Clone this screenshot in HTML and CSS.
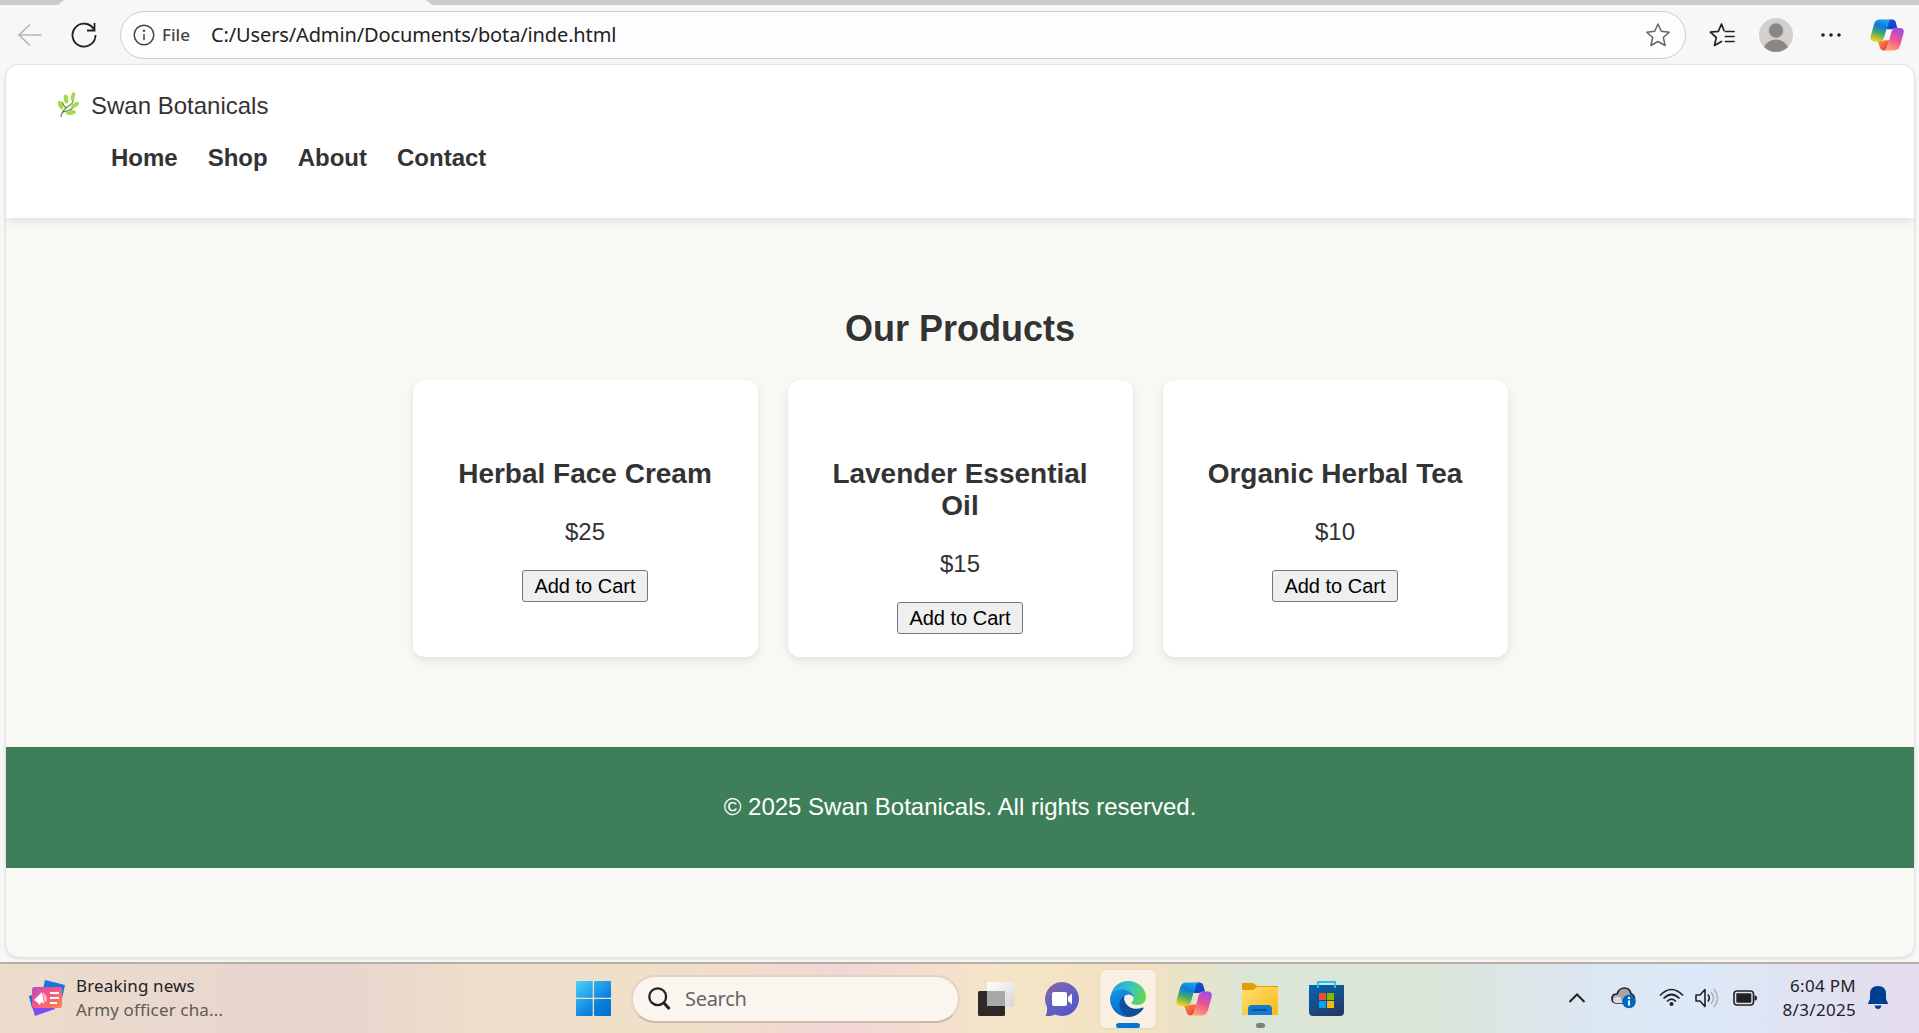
FILE: index.html
```html
<!DOCTYPE html>
<html lang="en">
<head>
<meta charset="utf-8">
<title>Swan Botanicals</title>
<link rel="stylesheet" href="styles.css">
</head>
<body>
<svg class="defs" width="0" height="0" aria-hidden="true">
  <defs>
    <linearGradient id="cpBlue" x1="0.6" y1="0" x2="0.3" y2="1"><stop offset="0" stop-color="#1ba2f0"/><stop offset=".3" stop-color="#0b7bdc"/><stop offset=".62" stop-color="#47a96b"/><stop offset="1" stop-color="#fcd116"/></linearGradient>
    <linearGradient id="cpPink" x1="0.7" y1="0" x2="0.3" y2="1"><stop offset="0" stop-color="#a54be8"/><stop offset=".5" stop-color="#ee5392"/><stop offset="1" stop-color="#ffa766"/></linearGradient>
    <linearGradient id="cpNavy" x1="0" y1="0" x2="1" y2="1"><stop offset="0" stop-color="#0a5fd8"/><stop offset="1" stop-color="#1739b8"/></linearGradient>
    <linearGradient id="cpRed" x1="0" y1="0" x2="1" y2="1"><stop offset="0" stop-color="#ff9a3d"/><stop offset="1" stop-color="#e5303c"/></linearGradient>
    <symbol id="copilot" viewBox="0 0 36 34">
      <path d="M8 23.500h3q3 0 4-1h5.500l-3 9q-1 2-3 2-3 0-4-3.500z" fill="url(#cpRed)"/>
      <path d="M20 .5h3.500q3 0 3.800 3l1.700 6.200h-2q-3 0-3.500 1.300h-6z" fill="url(#cpNavy)"/>
      <path d="M10 .5h13q-3 .8-4.200 5.500L15 19.500q-1.200 4.500-5 4.500H4.500Q-.5 24 .6 18.500L4 6Q5.500.5 10 .5z" fill="url(#cpBlue)"/>
      <path d="M27 9.500h4.500q5.500 0 4 6l-3.500 12.500q-1.500 5.500-6.500 5.500H14.500q3-.5 4-4l4-15.500q1.200-4.500 4.500-4.500z" fill="url(#cpPink)"/>
    </symbol>
  </defs>
</svg>
<div class="tabstrip"><span class="tab"></span></div>
<div class="toolbar">
  <svg class="back" width="26" height="26" viewBox="0 0 26 26" fill="none" stroke="#b5b5b5" stroke-width="1.6"><path d="M24.500 13H2M13 2.500L2 13l11 10.500"/></svg>
  <svg class="reload" width="28" height="28" viewBox="0 0 28 28" fill="none" stroke="#222" stroke-width="1.8"><path d="M24.400 9.200A11.500 11.500 0 1 0 25.500 14M24.500 2v7.500H17"/></svg>
  <div class="address">
    <svg width="22" height="22" viewBox="0 0 22 22" fill="none" stroke="#444" stroke-width="1.500"><circle cx="11" cy="11" r="9.800"/><path d="M11 10v6"/><circle cx="11" cy="6.800" r=".5"/></svg>
    <span class="scheme">File</span>
    <span class="url">C:/Users/Admin/Documents/bota/inde.html</span>
    <svg class="star" width="26" height="26" viewBox="0 0 26 26" fill="none" stroke="#666" stroke-width="1.500" stroke-linejoin="round"><path d="M13 2l3.300 7.300 8 .9-6 5.300 1.800 8L13 19.500 5.900 23.500l1.800-8-6-5.300 8-.9z"/></svg>
  </div>
  <svg class="favs" width="26" height="26" viewBox="0 0 26 26" fill="none" stroke="#222" stroke-width="1.700" stroke-linejoin="round" stroke-linecap="round"><path d="M15 8.500L12.500 2 9.300 9.300l-8 .9 6 5.300-1.800 8 7-4M16.500 9.500H25M16.500 14.500H25M16.500 19.500H25"/></svg>
  <svg class="profile" width="34" height="34" viewBox="0 0 34 34"><circle cx="17" cy="17" r="17" fill="#d2d0ce"/><circle cx="17" cy="12.500" r="7.200" fill="#8a8684"/><path d="M5 29Q9 21.500 17 21.500T29 29Q24 34 17 34T5 29z" fill="#8a8684"/></svg>
  <svg class="more" width="20" height="6" viewBox="0 0 20 6" fill="#222"><circle cx="2" cy="3" r="1.800"/><circle cx="10" cy="3" r="1.800"/><circle cx="18" cy="3" r="1.800"/></svg>
  <svg class="cp" width="34" height="32"><use href="#copilot"/></svg>
</div>
<div class="page">
  <header class="site-header">
    <div class="logo">
      <svg width="24" height="26" viewBox="0 0 24 26"><path d="M5 25Q6 18 12 14.500T17 7M10 16Q7 13 6 10M7 20Q13 19 17 16" fill="none" stroke="#5f8f4f" stroke-width="1.300"/><g fill="#a6d94c"><ellipse cx="4.500" cy="13" rx="2.300" ry="4.500" transform="rotate(-22 4.500 13)"/><ellipse cx="10" cy="7" rx="2.200" ry="4.500" transform="rotate(-8 10 7)"/><ellipse cx="17" cy="4.500" rx="2" ry="4.500" transform="rotate(14 17 4.500)"/><ellipse cx="19" cy="13" rx="2.200" ry="4.500" transform="rotate(55 19 13)"/><ellipse cx="15" cy="20.500" rx="2.400" ry="5" transform="rotate(82 15 20.500)"/></g></svg>
      <span>Swan Botanicals</span>
    </div>
    <nav><ul class="menu"><li>Home</li><li>Shop</li><li>About</li><li>Contact</li></ul></nav>
  </header>
  <main class="products">
    <h2>Our Products</h2>
    <div class="grid">
      <article class="card"><h3>Herbal Face Cream</h3><p>$25</p><button>Add to Cart</button></article>
      <article class="card"><h3>Lavender Essential Oil</h3><p>$15</p><button>Add to Cart</button></article>
      <article class="card"><h3>Organic Herbal Tea</h3><p>$10</p><button>Add to Cart</button></article>
    </div>
  </main>
  <footer class="site-footer">© 2025 Swan Botanicals. All rights reserved.</footer>
</div>
<div class="taskbar">
  <div class="widget">
    <svg width="36" height="36" viewBox="0 0 36 36"><defs><linearGradient id="nw" x1="0" y1="0" x2="1" y2="1"><stop offset="0" stop-color="#b453c8"/><stop offset=".4" stop-color="#f2508b"/><stop offset="1" stop-color="#ff8a4c"/></linearGradient></defs><path d="M16 0l20 5-4 18-20-5z" fill="#1676e0"/><path d="M0 16l22-3 4 16-20 7z" fill="#7a4df0"/><path d="M0 16l4-1 2 14-3-1z" fill="#1676c8"/><rect x="3" y="7" width="30" height="21" rx="2.500" fill="url(#nw)"/><path d="M5 20l8-8 2 12-3-2-1 3-3-3z" fill="#fff"/><path d="M14 12q4 3 4 9l-3 1z" fill="#ffb5cd"/><path d="M21 13h9M21 18h9M21 23h7" stroke="#fff" stroke-width="2"/></svg>
    <div class="news"><span>Breaking news</span><span class="sub">Army officer cha...</span></div>
  </div>
  <div class="center">
    <svg class="start" width="35" height="35" viewBox="0 0 35 35"><defs><linearGradient id="wn" gradientUnits="userSpaceOnUse" x1="0" y1="0" x2="30" y2="35"><stop offset="0" stop-color="#4cd0ff"/><stop offset=".7" stop-color="#0a80db"/><stop offset="1" stop-color="#0074d0"/></linearGradient></defs><g fill="url(#wn)"><rect width="16.700" height="16.700" rx="1"/><rect x="18" width="17" height="16.700" rx="1"/><rect y="18" width="16.700" height="17" rx="1"/><rect x="18" y="18" width="17" height="17" rx="1"/></g></svg>
    <div class="search"><svg width="23" height="23" viewBox="0 0 23 23" fill="none" stroke="#222" stroke-width="2.300"><circle cx="9.700" cy="9.700" r="8.400"/><path d="M15.500 15.500l6 6.500" stroke-width="3"/></svg><span>Search</span></div>
    <div class="apps">
      <div class="app"><svg width="36" height="34" viewBox="0 0 36 34"><defs><linearGradient id="tv" x1="0" y1="0" x2="1" y2="1"><stop offset="0" stop-color="#fff"/><stop offset="1" stop-color="#d6d6d6"/></linearGradient></defs><rect y="9" width="27" height="25" rx="1.500" fill="#2b2a29"/><rect x="9" width="27" height="24" rx="1.500" fill="url(#tv)"/><path d="M9 9h18v15H9z" fill="#a8a8a8"/></svg></div>
      <div class="app"><svg width="34" height="34" viewBox="0 0 34 34"><defs><linearGradient id="ch" x1="0" y1="0" x2=".6" y2="1"><stop offset="0" stop-color="#95649d"/><stop offset=".45" stop-color="#6a62bd"/><stop offset="1" stop-color="#5457cb"/></linearGradient></defs><path d="M17 0a17 17 0 1 1-7 32.500Q6 34.500.5 34q2-3 1.500-9A17 17 0 0 1 17 0z" fill="url(#ch)"/><rect x="7" y="10" width="15" height="14" rx="2" fill="#fff"/><path d="M23 15l4-3.500v11L23 19z" fill="#fff"/></svg></div>
      <div class="app active"><svg width="36" height="36" viewBox="0 0 36 36"><defs><linearGradient id="eg" x1="0" y1=".3" x2="1" y2=".5"><stop offset="0" stop-color="#269fe0"/><stop offset=".45" stop-color="#2fc0cf"/><stop offset="1" stop-color="#65d94d"/></linearGradient><linearGradient id="eb" x1="0" y1="0" x2=".3" y2="1"><stop offset="0" stop-color="#1894e2"/><stop offset="1" stop-color="#006dcb"/></linearGradient></defs><path d="M1 14C3 5 10 0 18 0c11 0 18 8 18 16 0 5-4 8-8.500 8-3 0-6-.7-6-2 0-1 2-1.500 2-5 0-4-4-8-10-8C8 9 3 11 1 14z" fill="url(#eg)"/><path d="M0 18C0 12 5 8.500 12 8.500c7 0 11.500 4 11.500 8-1-2-3-3-5-3-4 0-7 4-7 9 0 7 5 12.500 11 13.200Q20 36 18 36C8 36 0 28 0 18z" fill="url(#eb)"/><path d="M14.500 14.700C11 17 9.500 20 9.500 24c0 6 5 11.500 11 11.800 5-.5 10-3.500 13-8.300.5-1-.5-1.300-1.500-.8-7 3-15 0-17.500-7-.5-1.800-.3-3.500 0-5z" fill="#104f9c"/></svg><i class="bar"></i></div>
      <div class="app"><svg width="36" height="34"><use href="#copilot"/></svg></div>
      <div class="app"><svg width="36" height="32" viewBox="0 0 36 32"><defs><linearGradient id="fo" x1="0" y1="0" x2="1" y2="1"><stop offset="0" stop-color="#ffdf73"/><stop offset="1" stop-color="#fcb916"/></linearGradient></defs><path d="M0 0h11l4 3h21v10H0z" fill="#e19d05"/><path d="M0 7h11l4-3h21v28H0z" fill="url(#fo)"/><path d="M6 32v-6q0-4 4-4h16q4 0 4 4v6z" fill="#117bd0"/><rect x="10" y="26" width="15" height="2" rx="1" fill="#0b4f96"/></svg><i class="dot"></i></div>
      <div class="app"><svg width="35" height="35" viewBox="0 0 35 35"><defs><linearGradient id="st" x1="0" y1="0" x2=".6" y2="1"><stop offset="0" stop-color="#0067b8"/><stop offset="1" stop-color="#263a66"/></linearGradient></defs><path d="M0 4h35v27q0 4-4 4H4q-4 0-4-4z" fill="url(#st)"/><path d="M9 7V1h17v6" fill="none" stroke="#1fc4f5" stroke-width="2"/><path d="M10 12h7v7h-7z" fill="#f25022"/><path d="M18 12h7v7h-7z" fill="#7fba00"/><path d="M10 20h7v7h-7z" fill="#00a4ef"/><path d="M18 20h7v7h-7z" fill="#ffb900"/></svg></div>
    </div>
  </div>
  <div class="tray">
    <svg class="chev" width="18" height="12" viewBox="0 0 18 12" fill="none" stroke="#222" stroke-width="2"><path d="M1.500 10L9 2.500 16.500 10"/></svg>
    <svg class="cloud" width="26" height="22" viewBox="0 0 26 22"><path d="M6 16Q1 16 1 11.500T6 7Q8 1 13.500 1T20 7q3 .5 3.500 4L12 16z" fill="#a5a5a5" stroke="#222" stroke-width="1.700"/><path d="M2 13q2-4 7-3l3 6H6Q2 16 2 13z" fill="#ddd"/><circle cx="18" cy="14.500" r="6.800" fill="#0067c0"/><path d="M18 13.500v5" stroke="#fff" stroke-width="2"/><circle cx="18" cy="11" r="1.200" fill="#fff"/></svg>
    <svg class="wifi" width="25" height="19" viewBox="0 0 25 19" fill="none" stroke="#222" stroke-width="1.700"><path d="M1 7.500Q12.500-4.500 24 7.500M4.500 10.500q8-8 16 0M8 13.500q4.500-4.500 9 0"/><circle cx="12.500" cy="16" r="2" fill="#222" stroke="none"/></svg>
    <svg class="vol" width="26" height="20" viewBox="0 0 26 20" fill="none" stroke="#222" stroke-width="1.600" stroke-linejoin="round"><path d="M1 7h4l5-5.500v17L5 13H1zM13 6.500q2.500 3.500 0 7"/><path d="M16 4q5 6 0 12M19 1q7 9 0 18" stroke="#aab2bc"/></svg>
    <svg class="batt" width="24" height="16" viewBox="0 0 24 16"><rect x="1" y="1" width="19.500" height="14" rx="3" fill="none" stroke="#222" stroke-width="1.600"/><rect x="3.300" y="3.300" width="15" height="9.400" rx="1" fill="#222"/><path d="M21.500 5.500h1q1.500 0 1.500 2.500t-1.500 2.500h-1z" fill="#222"/></svg>
    <div class="clock"><span>6:04 PM</span><span>8/3/2025</span></div>
    <svg class="bell" width="20" height="23" viewBox="0 0 20 23" fill="#003e92"><path d="M10 0q8 0 8 8v5l2 4.500v.5H0v-.5L2 13V8q0-8 8-8zM6.500 19.500h7q-1 3.500-3.500 3.500t-3.500-3.500z"/></svg>
  </div>
</div>
</body>
</html>
```
FILE: styles.css
```css
* { box-sizing: border-box; }
body { margin: 0; width: 1919px; height: 1033px; overflow: hidden; display: flex; flex-direction: column; background: #f7f7f7; font-family: "Liberation Sans", Arial, sans-serif; color: #333; }
.defs { position: absolute; }
svg { display: block; flex: none; }

.tabstrip { height: 5px; flex: none; background: #cbcbcb; padding-left: 58px; }
.tab { display: block; width: 374px; height: 5px; background: #f7f7f7; clip-path: polygon(6px 0, 368px 0, 100% 100%, 0 100%); }
.toolbar { height: 59px; flex: none; display: flex; align-items: center; padding: 0 14px 0 17px; font-family: "Noto Sans", sans-serif; }
.reload { margin-left: 27px; }
.address { width: 1566px; height: 48px; margin: 0 23px 0 22px; padding: 0 14px 0 12px; border: 1.5px solid #cdcdcd; border-radius: 24px; background: #fdfdfd; display: flex; align-items: center; }
.scheme { font-size: 17px; font-weight: 500; color: #444; margin-left: 7px; width: 49px; }
.url { font-size: 20px; letter-spacing: -0.13px; color: #222; flex: 1; }
.profile { margin-left: 24px; }
.more { margin-left: 28px; }
.cp { margin-left: 29px; }

.page { width: 1910px; height: 894px; flex: none; margin-left: 5px; border: 1px solid #e2e2e2; border-radius: 14px; overflow: hidden; background: #f8f9f4; box-shadow: 0 1px 3px rgba(0,0,0,.1); font-size: 24px; line-height: 27px; }
.site-header { height: 153px; padding: 25px 50px 0; background: #fff; box-shadow: 0 3px 8px rgba(0,0,0,.1); position: relative; }
.logo { height: 30px; display: flex; align-items: center; gap: 11px; }
.menu { margin: 24px 0; padding: 0 0 0 55px; display: flex; gap: 30px; list-style: none; font-weight: bold; }
.products { height: 529px; padding: 90px 0; text-align: center; }
h2 { font-size: 36px; line-height: 41px; margin: 0 0 31px; }
.grid { display: grid; grid-template-columns: repeat(3, 345px); gap: 30px; justify-content: center; }
.card { height: 277px; padding: 78px 24px 0; background: #fff; border-radius: 12px; box-shadow: 0 3px 8px rgba(0,0,0,.1); }
h3 { margin: 0 0 28px; font-size: 28px; line-height: 32px; }
.card p { margin: 0 0 25px; }
button { width: 126px; height: 32px; padding: 0; font: 20px "Liberation Sans", Arial, sans-serif; color: #000; background: #efefef; border: 1px solid #767676; border-radius: 3px; }
.site-footer { height: 121px; padding-bottom: 3px; background: #3e7f5a; color: #fff; display: flex; align-items: center; justify-content: center; }

.taskbar { height: 71px; flex: none; margin-top: auto; border-top: 2px solid #b9aca2; display: grid; grid-template-columns: 576px 1fr auto; align-items: center; font-family: "Noto Sans", sans-serif; color: #222; background: linear-gradient(90deg, #ecdccb 0, #e8d6cf 14%, #e8d6cf 18%, #efdeca 25%, #f0dfc8 36%, #f2d6d6 44%, #f5e5c8 52%, #f1e2c0 60%, #dbe5d6 65%, #dae6d8 74%, #dbe6ee 81%, #dce9f8 88%, #e4dcec 100%); }
.widget { display: flex; align-items: center; gap: 11px; padding: 0 0 2px 29px; }
.news, .clock { display: flex; flex-direction: column; font-size: 17px; line-height: 24px; letter-spacing: 0.15px; }
.sub { color: #5f5a55; }
.center { display: flex; align-items: center; }
.search { width: 329px; height: 48px; margin: 0 8px 0 20px; padding-left: 15px; border: 2px solid #e2d3c3; border-bottom-color: #cbb9aa; border-radius: 24px; background: #fbf5f0; display: flex; align-items: center; gap: 14px; font-size: 20px; letter-spacing: -0.3px; color: #666; }
.apps { display: flex; gap: 10px; }
.app { width: 56px; height: 58px; display: grid; place-items: center; position: relative; border-radius: 6px; }
.active { background: #f9f0e2; box-shadow: 0 0 1px 1px #e5d9c5; }
.bar, .dot { position: absolute; bottom: 0; height: 5px; border-radius: 3px; }
.bar { width: 24px; left: 16px; background: #0078d4; }
.dot { width: 9px; left: 24px; background: #80807a; }
.tray { display: flex; align-items: center; padding: 0 31px 2px 0; }
.cloud { margin-left: 25px; }
.wifi { margin-left: 22px; }
.vol { margin-left: 11px; }
.batt { margin-left: 12px; }
.clock { width: 79px; margin-left: 20px; text-align: right; letter-spacing: 0.3px; }
.bell { margin-left: 12px; }
```
